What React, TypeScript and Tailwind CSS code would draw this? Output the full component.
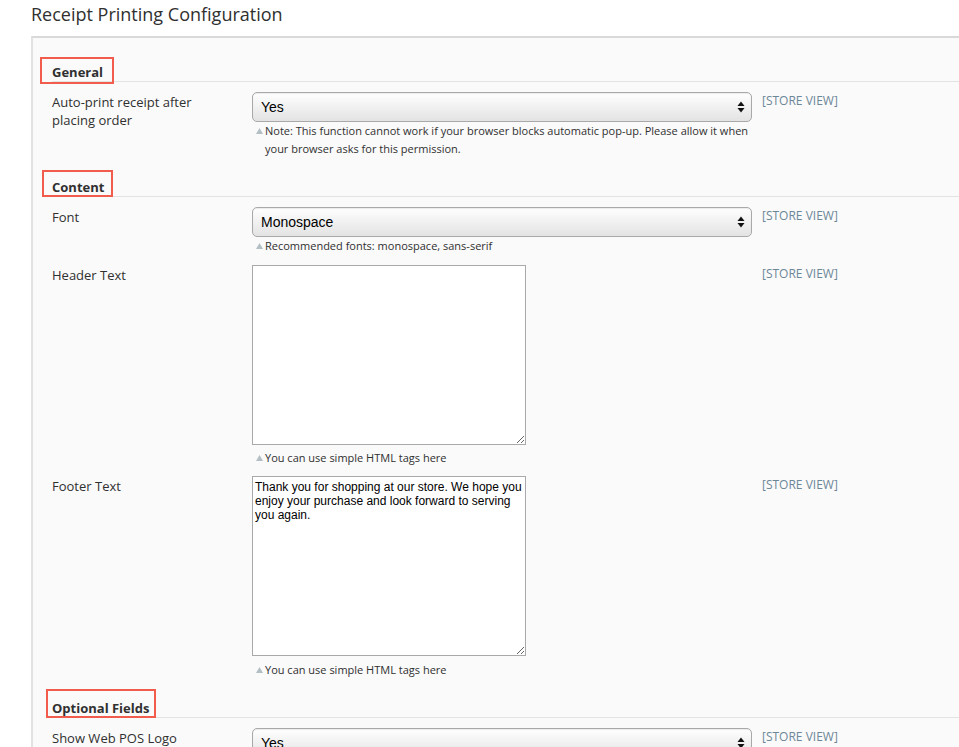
import React from "react";

function SectionHeading({ title, mt, box }: { title: string; mt: string; box: string }) {
  return (
    <div className={`${mt} border-b border-[#e3e3e3] text-[13px] font-bold leading-[18px] text-[#303030]`}>
      <span className="relative inline-block">
        {title}
        {/* red annotation box */}
        <span className={`absolute border-2 border-[#f25c4d] ${box}`} />
      </span>
    </div>
  );
}

function SelectBox({ value }: { value: string }) {
  return (
    <div className="flex h-[30px] w-[500px] items-center justify-between rounded-[5px] border border-[#a9a9a9] bg-gradient-to-b from-white to-[#e3e3e3] pl-[8px] pr-[6px] font-['Liberation_Sans',Arial,sans-serif] text-[14px] text-black shadow-[inset_0_1px_1px_rgba(0,0,0,0.08)]">
      <span>{value}</span>
      <svg width="8" height="12" viewBox="0 0 8 12">
        <path d="M4 0.5 L7.5 5 L0.5 5 Z" fill="#111" />
        <path d="M4 11.5 L7.5 7 L0.5 7 Z" fill="#111" />
      </svg>
    </div>
  );
}

function Note({ children, mt = "mt-0" }: { children: React.ReactNode; mt?: string }) {
  return (
    <div className={`${mt} flex text-[11px] leading-[18px] text-[#303030]`}>
      <svg width="7" height="6" viewBox="0 0 7 6" className="ml-[4px] mr-[2px] mt-[6px] shrink-0">
        <path d="M3.5 0 L7 6 L0 6 Z" fill="#b3bfc5" />
      </svg>
      <span>{children}</span>
    </div>
  );
}

function Row({ label, mt = "mt-[10px]", children }: { label: string; mt?: string; children: React.ReactNode }) {
  return (
    <div className={`${mt} flex`}>
      <div className="w-[200px] shrink-0 pr-[30px] pt-px text-[13px] leading-[18px] text-[#303030]">{label}</div>
      <div className="w-[500px] shrink-0">{children}</div>
      <div className="ml-[10px] shrink-0 text-[12px] leading-[18px] text-[#6c8798]">[STORE VIEW]</div>
    </div>
  );
}

function Area({ value = "" }: { value?: string }) {
  return (
    <textarea
      defaultValue={value}
      className="block h-[180px] w-[274px] border border-[#a9a9a9] bg-white pb-[2px] pl-[2px] pr-0 pt-[3px] font-['Liberation_Sans',Arial,sans-serif] text-[12px] leading-[14px] text-black outline-none"
    />
  );
}

export default function App() {
  return (
    <div className="h-[747px] w-[959px] overflow-hidden bg-white font-['Open_Sans',sans-serif]">
      {/* Title */}
      <h1 className="pl-[31px] pt-[3px] text-[18px] leading-[22px] text-[#303030]">Receipt Printing Configuration</h1>

      {/* Panel */}
      <div className="ml-[31px] mt-[11px] h-[800px] w-[1000px] border-l-2 border-t-2 border-l-[#e2e2e2] border-t-[#d9d9d9] bg-[#fafafa] pl-[19px]">
        {/* General */}
        <SectionHeading title="General" mt="mt-[25px]" box="-left-[12px] -top-[6px] -right-[11px] -bottom-[3px]" />
        <Row label="Auto-print receipt after placing order">
          <SelectBox value="Yes" />
          <Note>
            Note: This function cannot work if your browser blocks automatic pop-up. Please allow it when your browser
            asks for this permission.
          </Note>
        </Row>

        {/* Content */}
        <SectionHeading title="Content" mt="mt-[20px]" box="-left-[10px] -top-[8px] -right-[9px] -bottom-[1px]" />
        <Row label="Font">
          <SelectBox value="Monospace" />
          <Note>Recommended fonts: monospace, sans-serif</Note>
        </Row>
        <Row label="Header Text">
          <Area />
          <Note mt="mt-[4px]">You can use simple HTML tags here</Note>
        </Row>
        <Row label="Footer Text" mt="mt-[9px]">
          <Area value="Thank you for shopping at our store. We hope you enjoy your purchase and look forward to serving you again." />
          <Note mt="mt-[5px]">You can use simple HTML tags here</Note>
        </Row>

        {/* Optional Fields */}
        <SectionHeading title="Optional Fields" mt="mt-[20px]" box="-left-[6px] -top-[10px] -right-[7px] -bottom-[1px]" />
        <Row label="Show Web POS Logo">
          <SelectBox value="Yes" />
        </Row>
      </div>
    </div>
  );
}
